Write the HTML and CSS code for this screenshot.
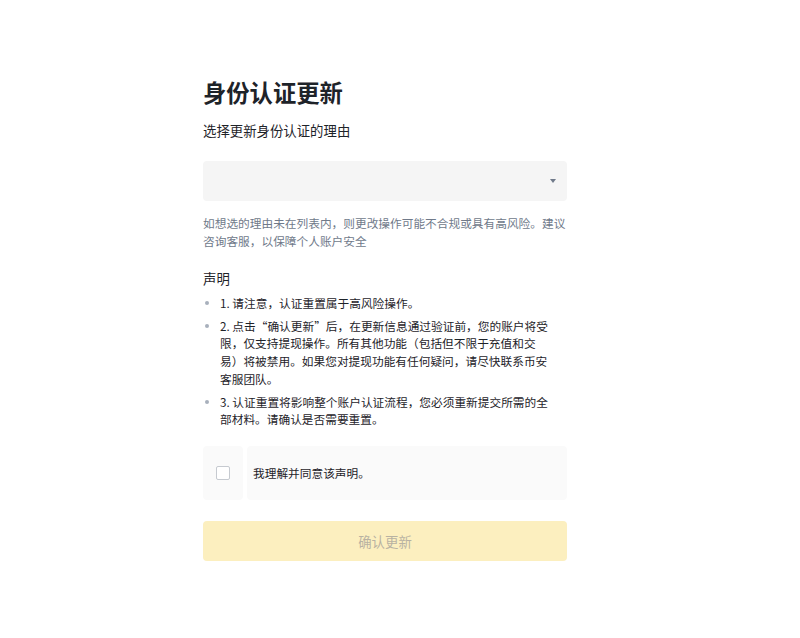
FILE: index.html
```html
<!DOCTYPE html>
<html lang="zh-CN">
<head>
    <meta charset="UTF-8">
    <title>身份认证更新</title>
    <link rel="stylesheet" href="styles.css">
</head>
<body>
    <div class="page">
        <div class="form-box">
            <h1 class="title">身份认证更新</h1>
            <div class="label">选择更新身份认证的理由</div>
            <div class="select-box">
                <span class="caret"></span>
            </div>
            <p class="hint">如想选的理由未在列表内，则更改操作可能不合规或具有高风险。建议咨询客服，以保障个人账户安全</p>
            <div class="section-title">声明</div>
            <ul class="notice-list">
                <li>1. 请注意，认证重置属于高风险操作。</li>
                <li>2. 点击“确认更新”后，在更新信息通过验证前，您的账户将受限，仅支持提现操作。所有其他功能（包括但不限于充值和交易）将被禁用。如果您对提现功能有任何疑问，请尽快联系币安客服团队。</li>
                <li>3. 认证重置将影响整个账户认证流程，您必须重新提交所需的全部材料。请确认是否需要重置。</li>
            </ul>
            <div class="agree-row">
                <div class="check-cell"><span class="checkbox"></span></div>
                <div class="agree-text">我理解并同意该声明。</div>
            </div>
            <button class="confirm-btn" disabled>确认更新</button>
        </div>
    </div>
</body>
</html>
```

FILE: styles.css
```css
body {
    margin: 0;
    background: #fff;
    font-family: "Noto Sans CJK SC", "Noto Sans", "Liberation Sans", sans-serif;
    color: #1e2329;
}
.page {
    display: flex;
    justify-content: center;
    padding-top: 76px;
}
.form-box {
    width: 364px;
    margin-left: -30px;
}
.title {
    margin: 0;
    font-size: 23.3px;
    line-height: 32px;
    font-weight: 700;
    color: #1e2329;
}
.label {
    margin-top: 12px;
    font-size: 13.4px;
    line-height: 20px;
    color: #1e2329;
}
.select-box {
    margin-top: 21px;
    height: 40px;
    background: #f5f5f5;
    border-radius: 4px;
    display: flex;
    align-items: center;
    justify-content: flex-end;
    padding-right: 11px;
}
.caret {
    width: 0;
    height: 0;
    border-left: 3px solid transparent;
    border-right: 3px solid transparent;
    border-top: 4px solid #707a8a;
}
.hint {
    margin: 13px 0 0 0;
    font-size: 11.7px;
    line-height: 18px;
    color: #707a8a;
}
.section-title {
    margin-top: 18px;
    font-size: 13.4px;
    line-height: 20px;
    color: #1e2329;
}
.notice-list {
    margin: 6px 0 0 0;
    padding: 0 16px 0 0;
}
.notice-list li {
    list-style: none;
    position: relative;
    padding-left: 17px;
    font-size: 11.7px;
    line-height: 17.7px;
    color: #1e2329;
    margin-bottom: 5px;
}
.notice-list li::before {
    content: "";
    position: absolute;
    left: 2px;
    top: 7px;
    width: 4px;
    height: 4px;
    border-radius: 50%;
    background: #a8b0bc;
}
.agree-row {
    display: flex;
    gap: 4px;
    margin-top: 18px;
    height: 54px;
}
.check-cell {
    width: 40px;
    background: #fafafa;
    border-radius: 4px;
    display: flex;
    align-items: center;
    justify-content: center;
}
.checkbox {
    width: 12px;
    height: 12px;
    border: 1px solid #c6cad0;
    border-radius: 2px;
    background: #fff;
}
.agree-text {
    flex: 1;
    background: #fafafa;
    border-radius: 4px;
    display: flex;
    align-items: center;
    padding-left: 6px;
    font-size: 11.7px;
    color: #1e2329;
}
.confirm-btn {
    display: block;
    width: 100%;
    margin-top: 21px;
    height: 40px;
    border: none;
    border-radius: 4px;
    background: #fcefbf;
    color: #b8b2a2;
    font-family: inherit;
    font-size: 13.4px;
}
```
